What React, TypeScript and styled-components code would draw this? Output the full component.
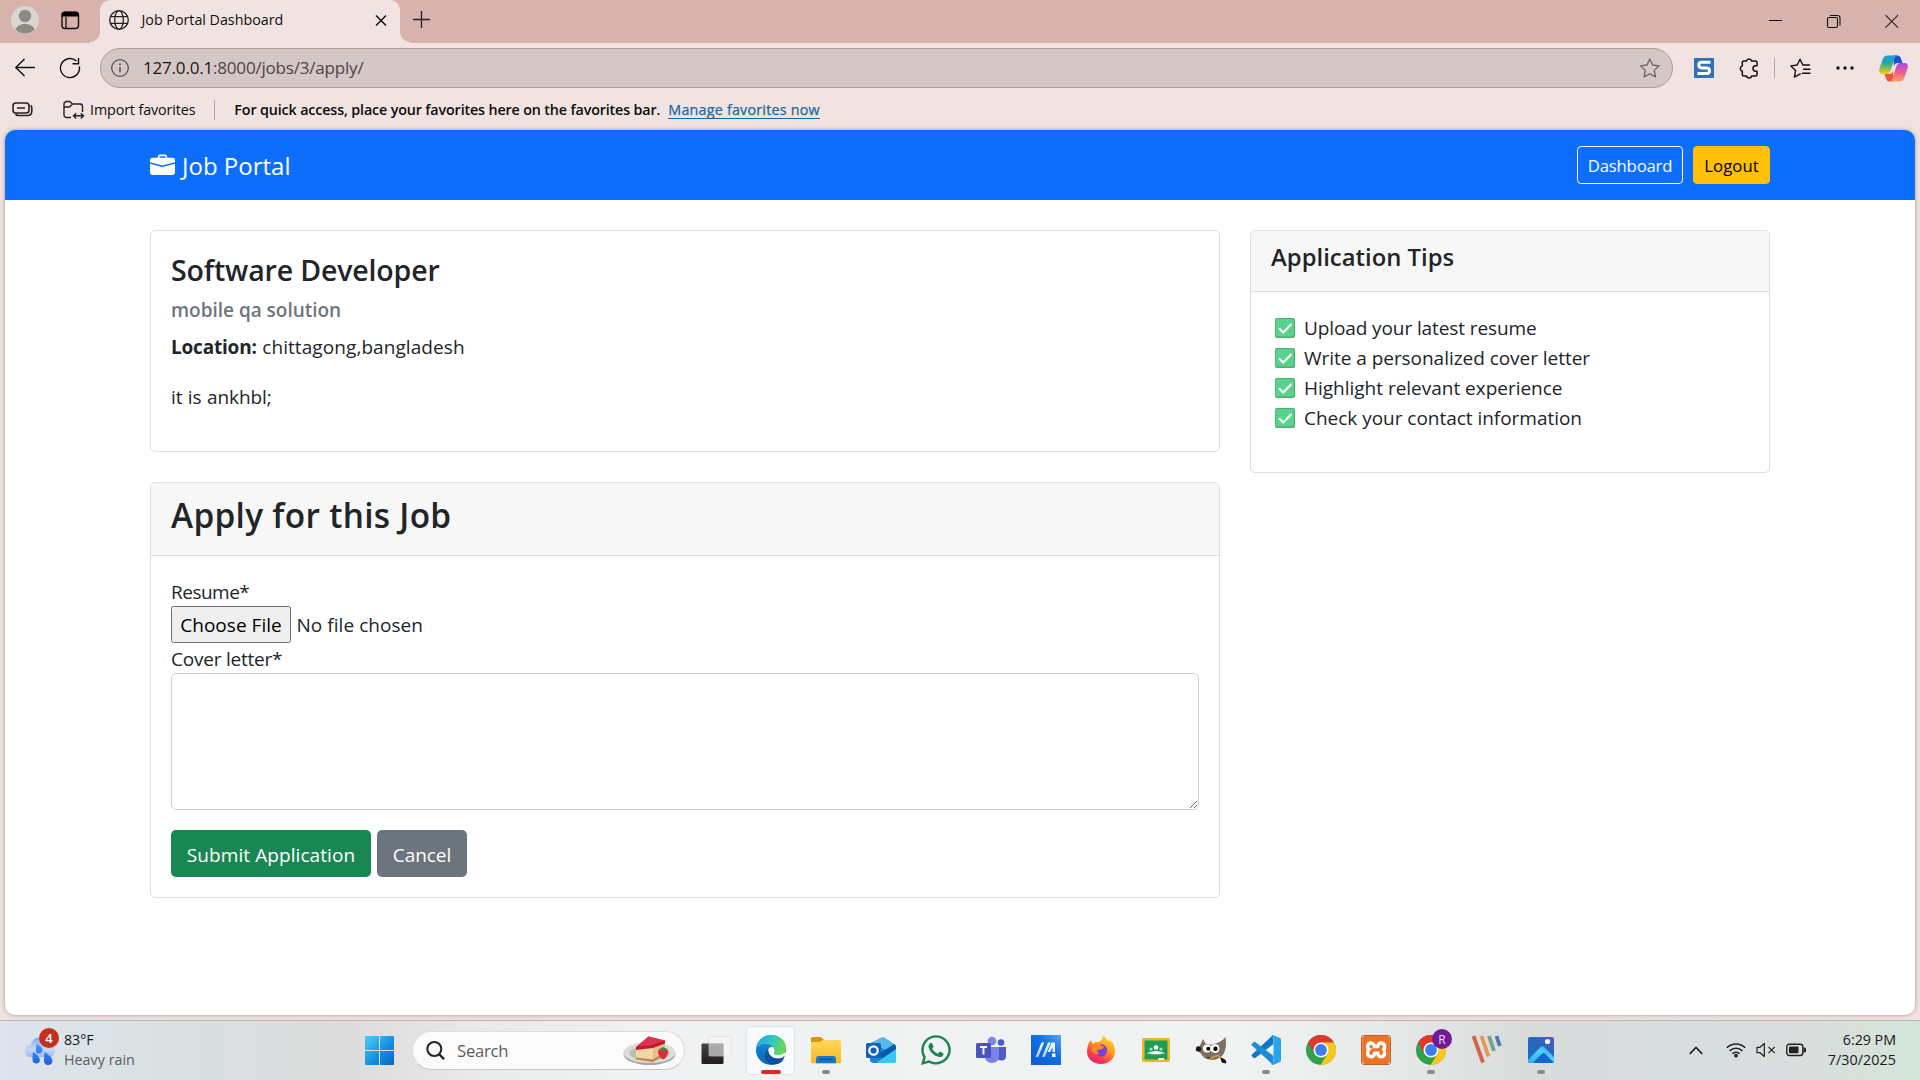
import React from "react";
import styled, { createGlobalStyle, css } from "styled-components";
import { BsBriefcaseFill } from "react-icons/bs";
import { FaWhatsapp } from "react-icons/fa";
import { SiXampp } from "react-icons/si";

const GlobalStyle = createGlobalStyle`
  * { box-sizing: border-box; }
  html, body { margin: 0; padding: 0; overflow: hidden; }
  body { font-family: "Open Sans", "Noto Sans", sans-serif; }
  button, textarea { font-family: inherit; }
  h2, h3, h4, h5, h6, p, ul { margin: 0; padding: 0; }
`;

/* ---------- shared text ---------- */

const Fit = styled.span<{ $ls?: number; $dy?: number; $drop?: boolean }>`
  display: inline-block;
  line-height: 1;
  white-space: pre;
  letter-spacing: ${(p) => p.$ls ?? 0}px;
  padding-top: ${(p) => p.$dy ?? 0}px;
  ${(p) => p.$drop && css`vertical-align: -1px;`}
`;

/* ---------- browser window ---------- */

const Screen = styled.div`
  width: 1920px;
  height: 1080px;
  display: flex;
  flex-direction: column;
  overflow: hidden;
`;

const Browser = styled.div`
  height: 1020px;
  display: flex;
  flex-direction: column;
  background: #f0e3e1;
`;

const TabStrip = styled.div`
  height: 43px;
  flex: none;
  display: flex;
  align-items: stretch;
  background: linear-gradient(#f0e3e1, #f0e3e1) left 90px top 0 / 320px 43px no-repeat, #d8b2ac;
`;

const StripStart = styled.div`
  width: 100px;
  height: 42px;
  padding: 6px 20px 8px 11px;
  display: flex;
  align-items: flex-start;
  justify-content: space-between;
  background: #d8b2ac;
  border-bottom-right-radius: 10px;
`;

const TabActionsSlot = styled.div`
  padding-top: 5px;
`;

const Tab = styled.div`
  width: 300px;
  height: 43px;
  padding: 0 13px 3px 9px;
  display: flex;
  align-items: center;
  background: #f0e3e1;
  border-radius: 10px 10px 0 0;
  box-shadow: 0 -10px 0 #d8b2ac;
  color: #111;
  font-size: 14.3px;
`;

const TabTitle = styled.div`
  flex: 1;
  padding-left: 12.5px;
  line-height: 20px;
`;

const StripEnd = styled.div`
  flex: 1;
  height: 42px;
  padding: 0 21px 0 12px;
  display: flex;
  align-items: flex-start;
  background: #d8b2ac;
  border-bottom-left-radius: 10px;
`;

const NewTab = styled.div`
  flex: 1;
  padding-top: 10px;
`;

const WindowControls = styled.div`
  display: flex;
  gap: 44px;
  padding-top: 13px;
`;

const Toolbar = styled.div`
  height: 52px;
  flex: none;
  padding-top: 5px;
  display: flex;
  align-items: flex-start;
`;

const NavButtons = styled.div`
  width: 100px;
  height: 40px;
  padding: 0 19px 0 14px;
  display: flex;
  align-items: center;
  justify-content: space-between;
`;

const AddressBar = styled.div`
  width: 1573px;
  height: 40px;
  padding: 0 12px 0 10px;
  display: flex;
  align-items: center;
  background: #d5c7c5;
  border: 1px solid #a99c9a;
  border-radius: 20px;
`;

const Url = styled.div`
  flex: 1;
  padding-left: 14px;
  font-size: 17px;
  line-height: 24px;
  color: #4b4545;
  b { font-weight: 400; color: #1b1818; }
`;

const ToolbarActions = styled.div`
  flex: 1;
  height: 40px;
  padding-left: 21px;
  display: flex;
  align-items: center;
  gap: 25px;
`;

const ExtensionGroup = styled.div`
  display: flex;
  align-items: center;
  gap: 15px;
`;

const Divider = styled.i`
  width: 1px;
  height: 20px;
  background: #b3a8a7;
`;

const FavoritesBar = styled.div`
  height: 34px;
  flex: none;
  padding: 0 12px 5px;
  display: flex;
  align-items: center;
  font-size: 14.3px;
  color: #0c0c0c;
`;

const ImportFavorites = styled.div`
  display: flex;
  align-items: center;
  gap: 6px;
  margin: 0 19px 0 30px;
`;

const FavoritesHint = styled.div`
  margin: 0 8px 0 19px;
  font-weight: 600;
`;

const FavoritesLink = styled.a`
  color: #1a67a3;
  font-weight: 500;
  -webkit-text-stroke: 0.25px #1a67a3;
  border-bottom: 1px solid #1a67a3;
  line-height: 17px;
  padding-top: 1px;
`;

/* ---------- web page ---------- */

const Page = styled.main`
  width: 1910px;
  height: 885px;
  margin: 1px 5px 0;
  flex: none;
  overflow: hidden;
  background: #fff;
  border-radius: 10px;
  box-shadow: 0 0 4px rgba(90, 60, 55, 0.45);
  color: #212529;
  font-size: 19px;
  line-height: 30px;
`;

const Navbar = styled.nav`
  height: 70px;
  padding: 0 145px;
  display: flex;
  align-items: center;
  justify-content: space-between;
  background: #0d6efd;
  color: #fff;
`;

const Brand = styled.div`
  display: flex;
  align-items: center;
  gap: 7px;
  font-size: 24px;
`;

const NavActions = styled.div`
  display: flex;
  gap: 10px;
`;

const NavButton = styled.button<{ $warning?: boolean }>`
  height: 38px;
  width: ${(p) => (p.$warning ? 77 : 106)}px;
  padding: 0;
  font-size: 16.7px;
  border-radius: 4px;
  border: 1px solid ${(p) => (p.$warning ? "#ffc107" : "#f8f9fa")};
  background: ${(p) => (p.$warning ? "#ffc107" : "transparent")};
  color: ${(p) => (p.$warning ? "#000" : "#f8f9fa")};
`;

const Columns = styled.div`
  padding: 30px 145px;
  display: grid;
  grid-template-columns: 1070px 520px;
  column-gap: 30px;
  align-items: start;
`;

const MainColumn = styled.div`
  display: flex;
  flex-direction: column;
  gap: 30px;
`;

const Card = styled.section`
  border: 1px solid #dfdfdf;
  border-radius: 5px;
  background: #fff;
  overflow: hidden;
`;

const CardHeader = styled.header`
  padding: 10px 20px 20px;
  background: #f7f7f7;
  border-bottom: 1px solid #dfdfdf;
`;

const CardBody = styled.div`
  padding: 20px;
`;

const FormTitle = styled.h3`
  font-size: 33.4px;
  font-weight: 600;
  line-height: 42px;
  height: 42px;
`;

const TipsTitle = styled.h5`
  font-size: 23.8px;
  font-weight: 600;
  line-height: 30px;
  height: 30px;
`;

const JobTitle = styled.h4`
  font-size: 28.5px;
  font-weight: 600;
  line-height: 36px;
  height: 36px;
`;

const Company = styled.h6`
  margin: 10px 0;
  height: 24px;
  font-size: 19px;
  font-weight: 600;
  line-height: 24px;
  color: #6c757d;
`;

const Paragraph = styled.p`
  height: 30px;
  margin-bottom: 20px;
  word-spacing: 0.6px;
`;

const TipList = styled.ul`
  list-style: none;
  margin-bottom: 20px;
`;

const Tip = styled.li`
  height: 30px;
  display: flex;
  align-items: center;
  gap: 9px;
  padding: 2px 0 0 4px;
`;

const Label = styled.label`
  display: block;
  height: 30px;
`;

const FileRow = styled.div`
  height: 37px;
  display: flex;
  align-items: center;
  gap: 5.5px;
`;

const FileButton = styled.button`
  width: 120px;
  height: 37px;
  padding: 0;
  font-size: 19px;
  color: #000;
  background: #efefef;
  border: 1px solid #6f6f6f;
  border-radius: 2.5px;
`;

const CoverLetter = styled.textarea`
  display: block;
  width: 1028px;
  height: 137px;
  margin-bottom: 20px;
  border: 1px solid #cfd0d2;
  border-radius: 5px;
  resize: vertical;
  background: #fff;
`;

const FormActions = styled.div`
  display: flex;
  gap: 6px;
`;

const ActionButton = styled.button<{ $primary?: boolean }>`
  width: ${(p) => (p.$primary ? 200 : 90)}px;
  height: 47px;
  padding: 2px 0 0;
  border: 0;
  border-radius: 5px;
  color: #fff;
  font-size: 19px;
  background: ${(p) => (p.$primary ? "#198754" : "#6c757d")};
`;

/* ---------- taskbar ---------- */

const Taskbar = styled.footer`
  height: 60px;
  flex: none;
  display: flex;
  align-items: flex-start;
  border-top: 1px solid #b9b7b6;
  background: linear-gradient(90deg, #dfe3ec 0, #dae3e7 100px, #d8dfe0 190px, #dcdcdc 350px, #e9eaea 480px, #f0f1f2 640px, #f1f2f2 1240px, #e6e7e7 1400px, #d9dbdb 1530px, #d7dde0 1690px, #dadddd 1800px, #d4e3d8 1900px, #d3e5d9 1920px);
`;

const Weather = styled.div`
  width: 365px;
  height: 59px;
  padding: 7px 0 0 24px;
  display: flex;
  gap: 5px;
`;

const TwoLines = styled.div<{ $right?: boolean }>`
  display: flex;
  flex-direction: column;
  align-items: ${(p) => (p.$right ? "flex-end" : "flex-start")};
  padding-top: 2px;
  font-size: 14.3px;
  line-height: 20px;
  color: #191919;
`;

const Line = styled.div<{ $muted?: boolean }>`
  height: 20px;
  ${(p) => p.$muted && css`color: #5b5e60;`}
`;

const StartButton = styled.div`
  padding: 15px 18px 0 0;
`;

const SearchBox = styled.div`
  width: 273px;
  height: 39px;
  margin: 10px 3px 0 0;
  padding: 0 8px 0 13px;
  display: flex;
  align-items: center;
  background: #fbfbfb;
  border: 1px solid #dcdcdc;
  border-bottom-color: #c6c6c6;
  border-radius: 20px;
  font-size: 16.7px;
  color: #5c5c5c;
`;

const SearchLabel = styled.div`
  flex: 1;
  padding-left: 12px;
`;

const Apps = styled.div`
  display: flex;
`;

const AppSlot = styled.div`
  width: 55px;
  height: 59px;
  display: flex;
  flex-direction: column;
  align-items: center;
`;

const Tile = styled.div<{ $active?: boolean }>`
  width: 49px;
  height: 49px;
  margin-top: 5px;
  display: flex;
  flex-direction: column;
  align-items: center;
  padding-top: 8px;
  border-radius: 5px;
  border: 1px solid ${(p) => (p.$active ? "#e2e5e9" : "transparent")};
  background: ${(p) => (p.$active ? "#f8fafc" : "transparent")};
`;

const IconSlot = styled.div`
  width: 30px;
  height: 30px;
  flex: none;
  display: flex;
  align-items: center;
  justify-content: center;
`;

const Indicator = styled.i<{ $active?: boolean }>`
  width: ${(p) => (p.$active ? 20 : 8)}px;
  height: 4px;
  flex: none;
  margin-top: 5px;
  border-radius: 2px;
  background: ${(p) => (p.$active ? "#dc2a20" : "#8a8b8b")};
`;

const Tray = styled.div`
  flex: 1;
  height: 58px;
  padding-right: 24px;
  display: flex;
  align-items: center;
  justify-content: flex-end;
`;

const TrayGroup = styled.div`
  display: flex;
  align-items: center;
  gap: 10px;
  margin: 0 21.5px 0 23px;
`;

const Clock = styled(TwoLines)`
  width: 68.5px;
  padding: 0 0 1px;
`;

/* ---------- icons ---------- */

const Svg = styled.svg`
  display: block;
  flex: none;
  overflow: visible;
`;

const Avatar = () => (
  <Svg width="28" height="28" viewBox="0 0 28 28">
    <clipPath id="av"><circle cx="14" cy="14" r="13.500" /></clipPath>
    <circle cx="14" cy="14" r="14" fill="#d9d6d1" />
    <g clipPath="url(#av)" fill="#8d8a86"><circle cx="14" cy="10" r="6.200" /><ellipse cx="14" cy="26.500" rx="10.400" ry="8.800" /></g>
  </Svg>
);
const TabActions = () => (
  <Svg width="19" height="19" viewBox="0 0 19 19">
    <rect x="1" y="1.500" width="16.500" height="16" rx="3" fill="none" stroke="#111" strokeWidth="1.400" />
    <path d="M.5 5.500V4a3.500 3.500 0 0 1 3.500-3.500h10.500a3.500 3.500 0 0 1 3.500 3.500v1.500z" fill="#000" />
    <path d="M5 6v11" stroke="#111" strokeWidth="1.300" />
  </Svg>
);
const Globe = () => (
  <Svg width="20" height="20" viewBox="0 0 20 20" fill="none" stroke="#222" strokeWidth="1.300">
    <circle cx="10" cy="10" r="9.300" /><ellipse cx="10" cy="10" rx="4.300" ry="9.300" /><path d="M1.500 6.700h17M1.500 13.300h17" />
  </Svg>
);
const CloseTab = () => (
  <Svg width="12" height="12" viewBox="0 0 12 12" stroke="#111" strokeWidth="1.500"><path d="M1 1.500l10 10M11 1.500L1 11.500" /></Svg>
);
const Plus = () => (
  <Svg width="19" height="19" viewBox="0 0 19 19" stroke="#222" strokeWidth="1.300"><path d="M9.500 1v17M1 9.500h17" /></Svg>
);
const Minimize = () => (
  <Svg width="14" height="16" viewBox="0 0 14 16" stroke="#111" strokeWidth="1"><path d="M0 7.500h13" /></Svg>
);
const Restore = () => (
  <Svg width="14" height="16" viewBox="0 0 14 16" fill="none" stroke="#111" strokeWidth="1.100"><rect x=".5" y="4.500" width="10" height="10" rx="1.500" /><path d="M3 2.500h7.500A2.500 2.500 0 0 1 13 5v7.500" /></Svg>
);
const CloseWin = () => (
  <Svg width="14" height="16" viewBox="0 0 14 16" stroke="#2a2020" strokeWidth="1.100"><path d="M.5 2.200L13 14.700M13 2.200L.5 14.700" /></Svg>
);
const Back = () => (
  <Svg width="22" height="20" viewBox="0 0 22 20" fill="none" stroke="#111" strokeWidth="1.400"><path d="M21 9.500H2M10.500 1L1.800 9.500l8.700 8.500" /></Svg>
);
const Reload = () => (
  <Svg width="22" height="22" viewBox="0 0 22 22" fill="none" stroke="#111" strokeWidth="1.400">
    <path d="M20.300 9.300A9.500 9.500 0 1 1 17.400 4.100" /><path d="M19.500 1v5.800h-6" />
  </Svg>
);
const Info = () => (
  <Svg width="18" height="18" viewBox="0 0 18 18" fill="none" stroke="#555" strokeWidth="1.300"><circle cx="9" cy="9" r="8.300" /><path d="M9 8v5.200" strokeWidth="1.600" /><circle cx="9" cy="5.300" r="1" fill="#555" stroke="none" /></Svg>
);
const Star = () => (
  <Svg width="21" height="20" viewBox="0 0 21 20" fill="none" stroke="#6b6464" strokeWidth="1.300" strokeLinejoin="round">
    <path d="M10.800 1l2.800 6 6.400.9-4.700 4.500 1.200 6.500-5.700-3.100-5.700 3.100 1.200-6.500L1.500 7.900 8 7z" />
  </Svg>
);
const StarList = () => (
  <Svg width="21" height="20" viewBox="0 0 21 20" fill="none" stroke="#111" strokeWidth="1.400" strokeLinejoin="round" strokeLinecap="round">
    <path d="M10.300 15.900l-5.900 3.200 1.200-6.700L.9 7.900l6.300-.9L10 1.200l2.800 5.800h6.700M13.500 11.300h6.500M12.500 15.300h7.500" />
  </Svg>
);
const SnagIcon = () => (
  <Svg width="20" height="20" viewBox="0 0 20 20">
    <rect width="20" height="20" fill="#2f72b8" />
    <path d="M16.500 4.300H8Q4.800 4.300 4.800 7T8 9.900h4.500Q15.500 9.900 15.500 12.700T12.500 15.500H3.500" fill="none" stroke="#fff" strokeWidth="3" />
  </Svg>
);
const Puzzle = () => (
  <Svg width="20" height="21" viewBox="0 0 20 21" fill="none" stroke="#111" strokeWidth="1.500" strokeLinejoin="round">
    <path d="M4.800 3h2.700a2.700 2.700 0 0 1 5.200 0h3.800q1.500 0 1.500 1.500v3.300h-1.300a2.700 2.700 0 0 0 0 5.400H18v3.300q0 1.500-1.500 1.500h-3.800a2.700 2.700 0 0 1-5.200 0H4.800q-1.500 0-1.500-1.500v-3.400a2.700 2.700 0 0 1 0-5.200V4.500Q3.300 3 4.800 3z" />
  </Svg>
);
const Dots = () => (
  <Svg width="18" height="6" viewBox="0 0 18 6" fill="#111"><circle cx="2" cy="3" r="1.700" /><circle cx="9" cy="3" r="1.700" /><circle cx="16" cy="3" r="1.700" /></Svg>
);
const Copilot = () => (
  <Svg width="29" height="27" viewBox="0 0 29 27">
    <defs>
      <linearGradient id="cp1" x1="0" y1="0" x2="0" y2="1"><stop offset="0" stopColor="#179ce8" /><stop offset=".4" stopColor="#2aa79a" /><stop offset="1" stopColor="#f2d213" /></linearGradient>
      <linearGradient id="cp2" x1="0" y1="0" x2="0" y2="1"><stop offset="0" stopColor="#a748ee" /><stop offset=".5" stopColor="#ee5d93" /><stop offset="1" stopColor="#f9a35a" /></linearGradient>
    </defs>
    <path d="M14 .5h4.500q2.500 0 3.300 2.500l1.700 5h-5q-2.500 0-3.500 3z" fill="#1b52c8" />
    <path d="M15 26.500h-4.500q-2.500 0-3.300-2.500l-1.700-5h5q2.500 0 3.500-3z" fill="#f0523a" />
    <path d="M8.500.5h10q-2 0-3 3.200l-4 12.300Q10.500 19 7.500 19H4Q-.7 19 .3 14L3.600 4.500Q5 .5 8.500.5z" fill="url(#cp1)" />
    <path d="M20.500 26.500h-10q2 0 3-3.200l4-12.300Q18.500 8 21.500 8H25q4.700 0 3.700 5l-3.300 9.500q-1.400 4-4.900 4z" fill="url(#cp2)" />
  </Svg>
);
const FavPanel = () => (
  <Svg width="21" height="15" viewBox="0 0 21 15" fill="none" stroke="#222" strokeWidth="1.600"><rect x="1" y="1" width="16" height="10" rx="2.800" /><path d="M5 6h8M18.500 3.500q1.300.8 1.300 2.500v3q0 4.500-4 4.500H6.500q-2 0-3-1.500" /></Svg>
);
const ImportFolder = () => (
  <Svg width="21" height="20" viewBox="0 0 21 20" fill="none" stroke="#222" strokeWidth="1.400">
    <path d="M8 17.500H3.500A2.500 2.500 0 0 1 1 15V4A2.500 2.500 0 0 1 3.500 1.500h3.200L9.500 4H17a2.500 2.500 0 0 1 2.500 2.500V12M1 7h5.500l3-3" /><path d="M11 15.800h9M13.200 13.200l-2.700 2.600 2.700 2.600M17.800 13.200l2.700 2.600-2.700 2.600" />
  </Svg>
);
const Check = () => (
  <Svg width="20" height="20" viewBox="0 0 20 20">
    <rect width="20" height="20" rx="2" fill="#4fae74" /><rect x=".8" y="1" width="18" height="17.500" rx="1.500" fill="#57d38c" />
    <path d="M4 10.300l4.200 4.200L16.500 6" fill="none" stroke="#fff" strokeWidth="2" />
  </Svg>
);
const WeatherIcon = () => (
  <Svg width="35" height="40" viewBox="0 0 35 40">
    <defs>
      <linearGradient id="cl" x1="0" y1="0" x2="0" y2="1"><stop offset="0" stopColor="#86a9e8" /><stop offset=".6" stopColor="#c4d8f8" /><stop offset="1" stopColor="#9dbdf2" /></linearGradient>
      <linearGradient id="dr" x1="0" y1="0" x2="0" y2="1"><stop offset="0" stopColor="#4a94f2" /><stop offset="1" stopColor="#1263e8" /></linearGradient>
    </defs>
    <path d="M7 29q-6 0-6-5.500T7 17q1-7.500 8.500-7.500T25 16q6 .5 6 6.500T25 29z" fill="url(#cl)" />
    <path d="M8.500 31.500q0-4 .5-7.500 7 4 7 8.500a3.800 3.800 0 0 1-7.500-1zM12 22q0-3 .5-6.500 6 3.500 6 6.500T15 25.500t-3-3.500zM20 32q0-4 .5-8 8 4.500 8 9.500a4.200 4.200 0 0 1-8.500-1.500z" fill="url(#dr)" />
    <circle cx="25" cy="10" r="10" fill="#c62f20" />
    <text x="25" y="15" textAnchor="middle" fontSize="13" fontWeight="600" fill="#fff">4</text>
  </Svg>
);
const WindowsLogo = () => (
  <Svg width="29" height="29" viewBox="0 0 29 29">
    <defs><linearGradient id="win" x1="0" y1="0" x2="1" y2="1"><stop offset="0" stopColor="#4fd0fb" /><stop offset=".55" stopColor="#1490df" /><stop offset="1" stopColor="#0469c4" /></linearGradient></defs>
    <path d="M1 0h13v14H0V1q0-1 1-1zM15 0h13q1 0 1 1v13H15zM0 15h14v14H1q-1 0-1-1zM15 15h14v13q0 1-1 1H15z" fill="url(#win)" />
  </Svg>
);
const SearchIcon = () => (
  <Svg width="19" height="19" viewBox="0 0 19 19" fill="none" stroke="#222" strokeWidth="2"><circle cx="8.300" cy="8" r="7" /><path d="M13 13l5 5.300" strokeWidth="2.400" /></Svg>
);
const Cake = () => (
  <Svg width="53" height="30" viewBox="0 0 53 30">
    <ellipse cx="26.500" cy="18" rx="26" ry="11" fill="#a6a6a2" /><ellipse cx="26.500" cy="16.500" rx="26" ry="10.500" fill="#dcdcd8" /><ellipse cx="26.500" cy="17" rx="20" ry="7.500" fill="#bdbdb9" />
    <path d="M13 12l17-3 12-5v12l-11 8-18-1z" fill="#f2d6a6" /><path d="M30 10L42 5v13l-12 7z" fill="#e8bf8a" /><path d="M13 21.500l17 2 12-7v2l-12 7.500-17-2.500z" fill="#c28446" />
    <path d="M13 11L25.500.5 42 4.500v3L30 12l-17 2z" fill="#c41a35" /><path d="M14 10.500L25.500.5 41 4.500 29 9z" fill="#de3350" />
    <path d="M35 14.500q5-3 10 0 0 7-5 9-5-2.500-5-9z" fill="#e0293d" /><path d="M35.500 13.500l4.500-2.500 5 2.500-4 2z" fill="#49853a" />
  </Svg>
);
const TaskView = () => (
  <Svg width="30" height="30" viewBox="0 0 30 30">
    <defs><linearGradient id="tv" x1="0" y1="0" x2="0" y2="1"><stop offset="0" stopColor="#454545" /><stop offset="1" stopColor="#1d1d1d" /></linearGradient></defs>
    <rect x=".5" y="8.500" width="22" height="20.500" rx="1" fill="url(#tv)" /><rect x="8" y="1.500" width="22" height="19.500" rx="1" fill="#f5f5f5" fillOpacity=".72" stroke="#d8d8d8" strokeWidth=".6" /><path d="M8 8.500h14.500V21H8z" fill="#9b9b9b" fillOpacity=".6" />
  </Svg>
);
const Edge = () => (
  <Svg width="30" height="30" viewBox="0 0 30 30">
    <defs>
      <linearGradient id="e1" x1="0" y1="0" x2="1" y2=".4"><stop offset="0" stopColor="#1f9ddf" /><stop offset=".5" stopColor="#2fc3cd" /><stop offset="1" stopColor="#65d94d" /></linearGradient>
      <linearGradient id="e2" x1="0" y1="0" x2="0" y2="1"><stop offset="0" stopColor="#1c96dc" /><stop offset="1" stopColor="#0a62b8" /></linearGradient>
    </defs>
    <circle cx="15" cy="15" r="15" fill="url(#e2)" />
    <path d="M.2 13.500C1.500 5 7.500 0 15 0c8.500 0 15 6 15 12.500 0 5-3.500 7.500-7.500 7.500-3 0-5-1.200-4-2.500 1.300-1.700 1-6-4.500-7.800C8 8 2 10 .2 13.500z" fill="url(#e1)" />
    <path d="M12 14c-2.500 6 1 12.500 7 13q5 .3 9-4-1 4-6.500 6.100C13 31 9 25 9 20.500c0-3 1.500-5.500 3-6.500z" fill="#114c96" />
    <path d="M12.300 14q2-3 4.700-2 2.600 2.500 1.300 5.500-1.200 2.500 4.200 2.500 4 0 6.500-3 2 1 0 5-2 2-6 1.500c-7 .5-11.500-4.500-10.700-9.500z" fill="#f8fafc" />
    <path d="M12.200 14.500c-.5 5 4 9.500 9.800 9.300q4-.3 7-3.300-2.500 6-8.500 6.500c-6 0-10.500-6-8.300-12.500z" fill="#114c96" />
  </Svg>
);
const Explorer = () => (
  <Svg width="30" height="30" viewBox="0 0 30 30">
    <defs><linearGradient id="fe" x1="0" y1="0" x2="0" y2="1"><stop offset="0" stopColor="#ffd75e" /><stop offset="1" stopColor="#f8b91f" /></linearGradient></defs>
    <path d="M0 3.500Q0 2 1.500 2H10l3 3v4H0z" fill="#d99708" /><path d="M0 8q0-1 1-1h8l3-2h16.500Q30 5 30 6.500V27q0 1.300-1.500 1.300h-27Q0 28.300 0 27z" fill="url(#fe)" />
    <path d="M5 28.300v-4Q5 21 8 21h14q3 0 3 3.300v4z" fill="#1676c7" /><path d="M8.500 24.500h13" stroke="#0b4f8f" strokeWidth="1.300" />
  </Svg>
);
const Outlook = () => (
  <Svg width="30" height="30" viewBox="0 0 30 30">
    <path d="M4 8.500L17 2l11.500 7.500L30 12v13q0 3-3 3H8q-4 0-4-3z" fill="#1b86d4" /><path d="M6 8L17 2l11.500 7.500L20 15z" fill="#56b9ea" /><path d="M14 18l14.500-9L30 11v4l-14 9z" fill="#0c59a8" /><path d="M30 14v11q0 3-3 3H10z" fill="#38c6f4" />
    <rect y="8" width="15" height="15" rx="1.500" fill="#0f63bd" /><circle cx="7.500" cy="15.500" r="4.200" fill="none" stroke="#fff" strokeWidth="2.200" />
  </Svg>
);
const Teams = () => (
  <Svg width="30" height="30" viewBox="0 0 30 30">
    <circle cx="16" cy="6" r="4.300" fill="#7b83eb" /><circle cx="25" cy="7.500" r="3.300" fill="#5059c9" /><path d="M21 12h9v9q0 4.500-4.500 4.500T21 21z" fill="#5059c9" /><path d="M9 12h14v9q0 7-7 7t-7-7z" fill="#7b83eb" />
    <rect y="8" width="15" height="15" rx="1.500" fill="#4b53bc" /><path d="M4 12h7M7.500 12v7.500" stroke="#fff" strokeWidth="1.900" />
  </Svg>
);
const MyAsus = () => (
  <Svg width="30" height="30" viewBox="0 0 30 30">
    <defs>
      <linearGradient id="as" x1="0" y1="1" x2="1" y2="0"><stop offset="0" stopColor="#1157d8" /><stop offset=".6" stopColor="#1172e2" /><stop offset="1" stopColor="#5ea6f2" /></linearGradient>
      <linearGradient id="as2" x1="0" y1="0" x2="0" y2="1"><stop offset="0" stopColor="#fff" /><stop offset="1" stopColor="#fff" stopOpacity=".65" /></linearGradient>
    </defs>
    <rect width="30" height="30" fill="url(#as)" />
    <path d="M10.500 7.500h2.700L7.200 22H4.500zM17 7.500h2.700L13.700 22H11z" fill="url(#as2)" /><path d="M20.500 7.500H24V17h-2.500v-5l-2.300 5h-2.500z" fill="#fff" fillOpacity=".9" /><rect x="21" y="18.500" width="3.500" height="3.500" fill="#fff" />
  </Svg>
);
const WhatsApp = () => <FaWhatsapp size={34} color="#1f8354" />;
const Firefox = () => (
  <Svg width="30" height="30" viewBox="0 0 30 30">
    <defs>
      <linearGradient id="ff" x1=".8" y1="0" x2=".2" y2="1"><stop offset="0" stopColor="#ffe03a" /><stop offset=".4" stopColor="#ff9a1f" /><stop offset=".75" stopColor="#fb3a4d" /><stop offset="1" stopColor="#e01a7c" /></linearGradient>
    </defs>
    <path d="M1 17Q1 9 5 5l1.500 4Q9 6.500 12 7q3-.5 4.500-4Q17 1 18 .3q1 3.200 5 6.200.5-1 .2-2.200Q29 9 29 16c0 8-6.500 13-14 13S1 24 1 17z" fill="url(#ff)" />
    <circle cx="15" cy="15.500" r="6.200" fill="#8140d8" /><path d="M6 11q3-3 8-1.500 2 2 4 2-1 3.500-6 3-2 2 1 4.500-5 1-7-3.500z" fill="#ff8a1e" />
  </Svg>
);
const Classroom = () => (
  <Svg width="30" height="30" viewBox="0 0 30 30">
    <rect x="1" y="3" width="28" height="24" rx="2" fill="#f0b428" /><rect x="3.500" y="5.500" width="23" height="19" fill="#1f9d57" />
    <g fill="#a9dcc0"><circle cx="10" cy="14" r="1.600" /><circle cx="20" cy="14" r="1.600" /><path d="M6.500 19q0-2.500 3.500-2.500t3.500 2.500zM16.500 19q0-2.500 3.500-2.500t3.500 2.500z" /></g><g fill="#fff"><circle cx="15" cy="12.500" r="2.300" /><path d="M10 19.200q0-3.200 5-3.200t5 3.200z" /><path d="M17.500 23h5.500v2h-5.500z" /></g>
  </Svg>
);
const Gimp = () => (
  <Svg width="30" height="30" viewBox="0 0 30 30">
    <path d="M3 13Q5 8 7 4l2.500 4.500Q12 10 15 9.500 25 8 29.500 2q1.500 10-1.500 16-3.500 7-12 7Q6 24 4.500 17q-1-1-1.500-4z" fill="#7b7166" />
    <path d="M6 18q-2-3-4-5" stroke="#7b7166" strokeWidth="3" /><circle cx="2.500" cy="14" r="2.700" fill="#1a1a1a" />
    <circle cx="11" cy="13.500" r="4" fill="#fff" /><circle cx="19" cy="13.500" r="4.500" fill="#fff" /><circle cx="12.300" cy="13.800" r="2" /><circle cx="19.500" cy="13.800" r="2.200" />
    <path d="M11 22.500q6 1 11-1.500" stroke="#222" fill="none" strokeWidth="1" /><path d="M14 23.500l8-3 3 3" stroke="#d99a4a" fill="none" strokeWidth="1.600" /><path d="M25 23l4 2 1 3-4-1z" fill="#111" stroke="#111" />
  </Svg>
);
const VsCode = () => (
  <Svg width="30" height="30" viewBox="0 0 30 30">
    <path d="M22 .2L1 19.500q-1 .9 0 1.700l1.500 1.500q1 .9 2 .1L22.500 9z" fill="#0f78c2" /><path d="M22 29.800L1 10.500q-1-.9 0-1.700l1.500-1.500q1-.9 2-.1L22.500 21z" fill="#1b8cd8" />
    <path d="M22 0l7 3q1 .6 1 1.700v20.500q0 1.200-1 1.700l-7 3.100q-1 0-2-1l2.500-2V3L20 1q1-1 2-1z" fill="#2aa3ee" />
  </Svg>
);
const ChromeMark = () => (
  <>
    <circle cx="15" cy="15" r="15" fill="#2fa24c" />
    <path d="M2 7.500A15 15 0 0 1 28 7.500L15 8 8.500 18.700z" fill="#dd3a2c" />
    <path d="M28 7.500A15 15 0 0 1 14.500 30L21.500 18.800 15 7.500z" fill="#fbc61c" />
    <circle cx="15" cy="15" r="7.500" fill="#fff" /><circle cx="15" cy="15" r="5.900" fill="#3b7ded" />
  </>
);
const Chrome = () => <Svg width="30" height="30" viewBox="0 0 30 30"><ChromeMark /></Svg>;
const ChromeProfile = () => (
  <Svg width="30" height="30" viewBox="0 0 30 30">
    <ChromeMark /><circle cx="26" cy="4" r="10" fill="#701a96" /><text x="26" y="8.500" textAnchor="middle" fontSize="12" fill="#e8d9f2">R</text>
  </Svg>
);
const XamppTile = styled.div`
  width: 30px;
  height: 30px;
  display: flex;
  background: #fff;
  border-radius: 3px;
  overflow: hidden;
  color: #ee7425;
  border: 1px solid #b9622c;
`;
const Xampp = () => <XamppTile><SiXampp size={28} /></XamppTile>;
const Stripes = () => (
  <Svg width="30" height="30" viewBox="0 0 30 30" strokeWidth="3.800" fill="none">
    <path d="M2.500 1l9.500 26.500" stroke="#d0634a" /><path d="M10.500 1l7 20.500" stroke="#e09a52" /><path d="M18 1l5 15" stroke="#6da58f" /><path d="M25.500 1l3.300 10" stroke="#4a79b8" />
  </Svg>
);
const Photos = () => (
  <Svg width="30" height="30" viewBox="0 0 30 30">
    <defs>
      <linearGradient id="ph" x1="0" y1="1" x2="1" y2="0"><stop offset="0" stopColor="#146cd0" /><stop offset=".6" stopColor="#2b66bd" /><stop offset="1" stopColor="#6159b5" /></linearGradient>
      <linearGradient id="ph2" x1="1" y1="0" x2="0" y2="1"><stop offset="0" stopColor="#2f9fe8" /><stop offset=".4" stopColor="#4fd0f6" /><stop offset="1" stopColor="#2aa6ea" /></linearGradient>
    </defs>
    <clipPath id="phc"><rect x="2" y="2" width="26" height="26" rx="2" /></clipPath>
    <g clipPath="url(#phc)">
      <rect x="2" y="2" width="26" height="26" fill="url(#ph)" />
      <path d="M0 27L14.500 12q1.800-1.500 3.500 0L30 24v6H0z" fill="url(#ph2)" />
      <path d="M5 30l11-11.500q1.500-1.200 3 0L30 30z" fill="#1268cc" />
      <circle cx="21.500" cy="6.500" r="2.600" fill="#f2f4fb" />
    </g>
  </Svg>
);
const ChevronUp = () => (
  <Svg width="14" height="9" viewBox="0 0 14 9" fill="none" stroke="#222" strokeWidth="1.700"><path d="M.8 7.800L7 1.500l6.200 6.300" /></Svg>
);
const Wifi = () => (
  <Svg width="20" height="16" viewBox="0 0 20 16" fill="none" stroke="#222" strokeWidth="1.500"><path d="M.8 5.800a13 13 0 0 1 18.400 0M3.600 8.900a9 9 0 0 1 12.800 0M6.300 11.700a5.200 5.200 0 0 1 7.400 0" /><circle cx="10" cy="13.700" r="1.900" fill="#222" stroke="none" /></Svg>
);
const Muted = () => (
  <Svg width="20" height="16" viewBox="0 0 20 16" fill="none" stroke="#222" strokeWidth="1.200"><path d="M1 5.300h3L8.300 1.500v13L4 10.700H1z" strokeLinejoin="round" /><path d="M12.500 4.800l6.300 6.300M18.800 4.800l-6.300 6.300" /></Svg>
);
const Battery = () => (
  <Svg width="20" height="14" viewBox="0 0 20 14"><rect x=".8" y="1.300" width="16" height="11.200" rx="2.500" fill="none" stroke="#222" strokeWidth="1.400" /><rect x="3" y="3.500" width="9.500" height="6.800" rx=".8" fill="#222" /><path d="M17.500 4.500h1q1.500 0 1.500 1.500v2q0 1.500-1.500 1.500h-1z" fill="#222" /></Svg>
);

/* ---------- content ---------- */

const tips: [string, number][] = [
  ["Upload your latest resume", -0.103],
  ["Write a personalized cover letter", -0.039],
  ["Highlight relevant experience", -0.015],
  ["Check your contact information", -0.027],
];

const apps: { Icon: React.FC; state?: "open" | "active" }[] = [
  { Icon: TaskView },
  { Icon: Edge, state: "active" },
  { Icon: Explorer, state: "open" },
  { Icon: Outlook },
  { Icon: WhatsApp },
  { Icon: Teams },
  { Icon: MyAsus },
  { Icon: Firefox },
  { Icon: Classroom },
  { Icon: Gimp },
  { Icon: VsCode, state: "open" },
  { Icon: Chrome },
  { Icon: Xampp },
  { Icon: ChromeProfile, state: "open" },
  { Icon: Stripes },
  { Icon: Photos, state: "open" },
];

export default function App() {
  return (
    <Screen>
      <GlobalStyle />
      <Browser>
        <TabStrip>
          <StripStart><Avatar /><TabActionsSlot><TabActions /></TabActionsSlot></StripStart>
          <Tab>
            <Globe />
            <TabTitle><Fit $ls={-0.02}>Job Portal Dashboard</Fit></TabTitle>
            <CloseTab />
          </Tab>
          <StripEnd>
            <NewTab><Plus /></NewTab>
            <WindowControls><Minimize /><Restore /><CloseWin /></WindowControls>
          </StripEnd>
        </TabStrip>
        <Toolbar>
          <NavButtons><Back /><Reload /></NavButtons>
          <AddressBar>
            <Info />
            <Url><Fit $ls={-0.19}><b>127.0.0.1</b>:8000/jobs/3/apply/</Fit></Url>
            <Star />
          </AddressBar>
          <ToolbarActions>
            <SnagIcon />
            <ExtensionGroup><Puzzle /><Divider /><StarList /></ExtensionGroup>
            <Dots />
            <Copilot />
          </ToolbarActions>
        </Toolbar>
        <FavoritesBar>
          <FavPanel />
          <ImportFavorites><ImportFolder /><Fit $ls={-0.11} $dy={1}>Import favorites</Fit></ImportFavorites>
          <Divider />
          <FavoritesHint><Fit $ls={-0.14} $dy={1}>For quick access, place your favorites here on the favorites bar.</Fit></FavoritesHint>
          <FavoritesLink><Fit $ls={0.222}>Manage favorites now</Fit></FavoritesLink>
        </FavoritesBar>
        <Page>
          <Navbar>
            <Brand><BsBriefcaseFill size={25} /><Fit $dy={1}>Job Portal</Fit></Brand>
            <NavActions>
              <NavButton><Fit $ls={-0.18}>Dashboard</Fit></NavButton>
              <NavButton $warning><Fit $ls={0.078}>Logout</Fit></NavButton>
            </NavActions>
          </Navbar>
          <Columns>
            <MainColumn>
              <Card>
                <CardBody>
                  <JobTitle><Fit $drop $ls={-0.15}>Software Developer</Fit></JobTitle>
                  <Company><Fit $drop $ls={-0.02}>mobile qa solution</Fit></Company>
                  <Paragraph><b><Fit $drop $ls={-0.2}>Location:</Fit></b> <Fit $drop $ls={0.08}>chittagong,bangladesh</Fit></Paragraph>
                  <Paragraph><Fit $drop $ls={-0.08}>it is ankhbl;</Fit></Paragraph>
                </CardBody>
              </Card>
              <Card>
                <CardHeader><FormTitle><Fit $drop $ls={0.31}>Apply for this Job</Fit></FormTitle></CardHeader>
                <CardBody>
                  <Label><Fit $drop $ls={-0.5}>Resume*</Fit></Label>
                  <FileRow><FileButton><Fit $ls={0.027}>Choose File</Fit></FileButton><Fit $dy={1} $ls={0.05}>No file chosen</Fit></FileRow>
                  <Label><Fit $drop $ls={-0.22}>Cover letter*</Fit></Label>
                  <CoverLetter />
                  <FormActions>
                    <ActionButton $primary><Fit $ls={0.08}>Submit Application</Fit></ActionButton>
                    <ActionButton><Fit $ls={-0.08}>Cancel</Fit></ActionButton>
                  </FormActions>
                </CardBody>
              </Card>
            </MainColumn>
            <Card>
              <CardHeader><TipsTitle><Fit $drop $ls={0.04}>Application Tips</Fit></TipsTitle></CardHeader>
              <CardBody>
                <TipList>
                  {tips.map(([text, ls]) => (
                    <Tip key={text}><Check /><Fit $ls={ls}>{text}</Fit></Tip>
                  ))}
                </TipList>
              </CardBody>
            </Card>
          </Columns>
        </Page>
      </Browser>
      <Taskbar>
        <Weather>
          <WeatherIcon />
          <TwoLines>
            <Line><Fit $ls={-0.05}>83°F</Fit></Line>
            <Line $muted><Fit $ls={0.02}>Heavy rain</Fit></Line>
          </TwoLines>
        </Weather>
        <StartButton><WindowsLogo /></StartButton>
        <SearchBox><SearchIcon /><SearchLabel><Fit $ls={-0.27}>Search</Fit></SearchLabel><Cake /></SearchBox>
        <Apps>
          {apps.map(({ Icon, state }, i) => (
            <AppSlot key={i}>
              <Tile $active={state === "active"}>
                <IconSlot><Icon /></IconSlot>
                {state && <Indicator $active={state === "active"} />}
              </Tile>
            </AppSlot>
          ))}
        </Apps>
        <Tray>
          <ChevronUp />
          <TrayGroup><Wifi /><Muted /><Battery /></TrayGroup>
          <Clock $right>
            <Line><Fit $ls={-0.04}>6:29 PM</Fit></Line>
            <Line><Fit $ls={0.06}>7/30/2025</Fit></Line>
          </Clock>
        </Tray>
      </Taskbar>
    </Screen>
  );
}
